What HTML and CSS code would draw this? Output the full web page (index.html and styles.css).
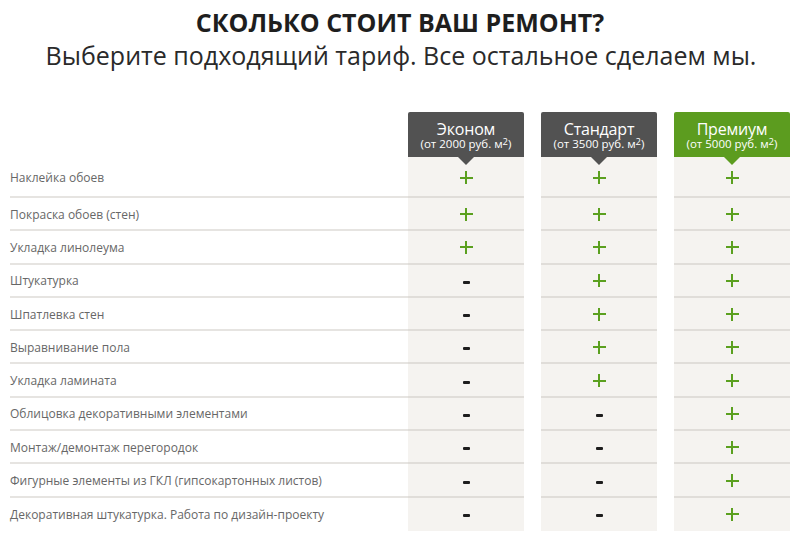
FILE: index.html
```html
<!DOCTYPE html>
<html lang="ru">
<head>
<meta charset="utf-8">
<title>Сколько стоит ваш ремонт?</title>
<link rel="stylesheet" href="styles.css">
</head>
<body>
<div class="page">
  <h1 class="title">СКОЛЬКО СТОИТ ВАШ РЕМОНТ?</h1>
  <p class="subtitle">Выберите подходящий тариф. Все остальное сделаем мы.</p>

  <div class="pricing">
    <div class="row head-row">
      <div class="label-space"></div>
      <div class="plan plan-dark">
        <div class="plan-name">Эконом</div>
        <div class="plan-price">(от 2000 руб. м<sup>2</sup>)</div>
      </div>
      <div class="plan plan-dark">
        <div class="plan-name">Стандарт</div>
        <div class="plan-price">(от 3500 руб. м<sup>2</sup>)</div>
      </div>
      <div class="plan plan-green">
        <div class="plan-name">Премиум</div>
        <div class="plan-price">(от 5000 руб. м<sup>2</sup>)</div>
      </div>
    </div>

    <div class="row row-first">
      <div class="label">Наклейка обоев</div>
      <div class="cell"><span class="yes"></span></div>
      <div class="cell"><span class="yes"></span></div>
      <div class="cell"><span class="yes"></span></div>
    </div>
    <div class="row">
      <div class="label">Покраска обоев (стен)</div>
      <div class="cell"><span class="yes"></span></div>
      <div class="cell"><span class="yes"></span></div>
      <div class="cell"><span class="yes"></span></div>
    </div>
    <div class="row">
      <div class="label">Укладка линолеума</div>
      <div class="cell"><span class="yes"></span></div>
      <div class="cell"><span class="yes"></span></div>
      <div class="cell"><span class="yes"></span></div>
    </div>
    <div class="row">
      <div class="label">Штукатурка</div>
      <div class="cell"><span class="no"></span></div>
      <div class="cell"><span class="yes"></span></div>
      <div class="cell"><span class="yes"></span></div>
    </div>
    <div class="row">
      <div class="label">Шпатлевка стен</div>
      <div class="cell"><span class="no"></span></div>
      <div class="cell"><span class="yes"></span></div>
      <div class="cell"><span class="yes"></span></div>
    </div>
    <div class="row">
      <div class="label">Выравнивание пола</div>
      <div class="cell"><span class="no"></span></div>
      <div class="cell"><span class="yes"></span></div>
      <div class="cell"><span class="yes"></span></div>
    </div>
    <div class="row">
      <div class="label">Укладка ламината</div>
      <div class="cell"><span class="no"></span></div>
      <div class="cell"><span class="yes"></span></div>
      <div class="cell"><span class="yes"></span></div>
    </div>
    <div class="row">
      <div class="label">Облицовка декоративными элементами</div>
      <div class="cell"><span class="no"></span></div>
      <div class="cell"><span class="no"></span></div>
      <div class="cell"><span class="yes"></span></div>
    </div>
    <div class="row">
      <div class="label">Монтаж/демонтаж перегородок</div>
      <div class="cell"><span class="no"></span></div>
      <div class="cell"><span class="no"></span></div>
      <div class="cell"><span class="yes"></span></div>
    </div>
    <div class="row">
      <div class="label">Фигурные элементы из ГКЛ (гипсокартонных листов)</div>
      <div class="cell"><span class="no"></span></div>
      <div class="cell"><span class="no"></span></div>
      <div class="cell"><span class="yes"></span></div>
    </div>
    <div class="row row-last">
      <div class="label">Декоративная штукатурка. Работа по дизайн-проекту</div>
      <div class="cell"><span class="no"></span></div>
      <div class="cell"><span class="no"></span></div>
      <div class="cell"><span class="yes"></span></div>
    </div>
  </div>
</div>
</body>
</html>
```

FILE: styles.css
```css
* { box-sizing: border-box; }

html, body {
  margin: 0;
  padding: 0;
  background: #ffffff;
}

body {
  font-family: "Open Sans", "Noto Sans", sans-serif;
  color: #333;
}

.page {
  width: 800px;
  padding: 6px 0 0 10px;
}

.title {
  margin: 0;
  padding-right: 10px;
  text-align: center;
  font-size: 25px;
  line-height: 33px;
  font-weight: 700;
  color: #1e1e1e;
}

.subtitle {
  margin: 0;
  padding-right: 8px;
  text-align: center;
  font-size: 25px;
  line-height: 32px;
  font-weight: 400;
  color: #2a2a2a;
}

.pricing {
  margin-top: 41px;
  width: 780px;
}

.row {
  display: flex;
  height: 33.3px;
}

.head-row {
  height: 45px;
}

.row-first {
  height: 41px;
}

.label-space {
  width: 398px;
  flex: none;
}

.plan {
  position: relative;
  width: 116px;
  flex: none;
  height: 45px;
  padding-top: 9px;
  text-align: center;
  color: #fff;
  border-radius: 2px 2px 0 0;
}

.plan + .plan,
.cell + .cell {
  margin-left: 17px;
}

.plan-dark { background: #525252; }
.plan-green { background: #5c9c1f; }

.plan::after {
  content: "";
  position: absolute;
  left: 50%;
  bottom: -8px;
  margin-left: -8px;
  border-left: 8px solid transparent;
  border-right: 8px solid transparent;
  border-top: 8px solid #525252;
}

.plan-green::after {
  border-top-color: #5c9c1f;
}

.plan-name {
  font-size: 16px;
  line-height: 16px;
  letter-spacing: -0.2px;
}

.plan-price {
  font-size: 11.5px;
  line-height: 13px;
}

.plan-price sup {
  font-size: 9.5px;
  line-height: 0;
  vertical-align: 3px;
}

.label {
  width: 398px;
  flex: none;
  display: flex;
  align-items: center;
  font-size: 12px;
  color: #676767;
  border-bottom: 2px solid #e6e4e1;
  padding-top: 1px;
}

.cell {
  width: 116px;
  flex: none;
  display: flex;
  align-items: center;
  justify-content: center;
  background: #f5f3f0;
  border-bottom: 2px solid #e0ddd9;
  padding-top: 1px;
}

.row-first .cell,
.row-first .label {
  padding-top: 2px;
}

.row-last .label,
.row-last .cell {
  border-bottom: none;
  padding-top: 0;
}

.yes {
  position: relative;
  display: block;
  width: 13px;
  height: 13px;
}

.yes::before,
.yes::after {
  content: "";
  position: absolute;
  background: #5ba01f;
}

.yes::before {
  left: 0;
  top: 5.5px;
  width: 13px;
  height: 2px;
}

.yes::after {
  left: 5.5px;
  top: 0;
  width: 2px;
  height: 13px;
}

.no {
  display: block;
  width: 7px;
  height: 3px;
  background: #1d1d1d;
  border-radius: 1px;
  margin-top: 3px;
}
```
